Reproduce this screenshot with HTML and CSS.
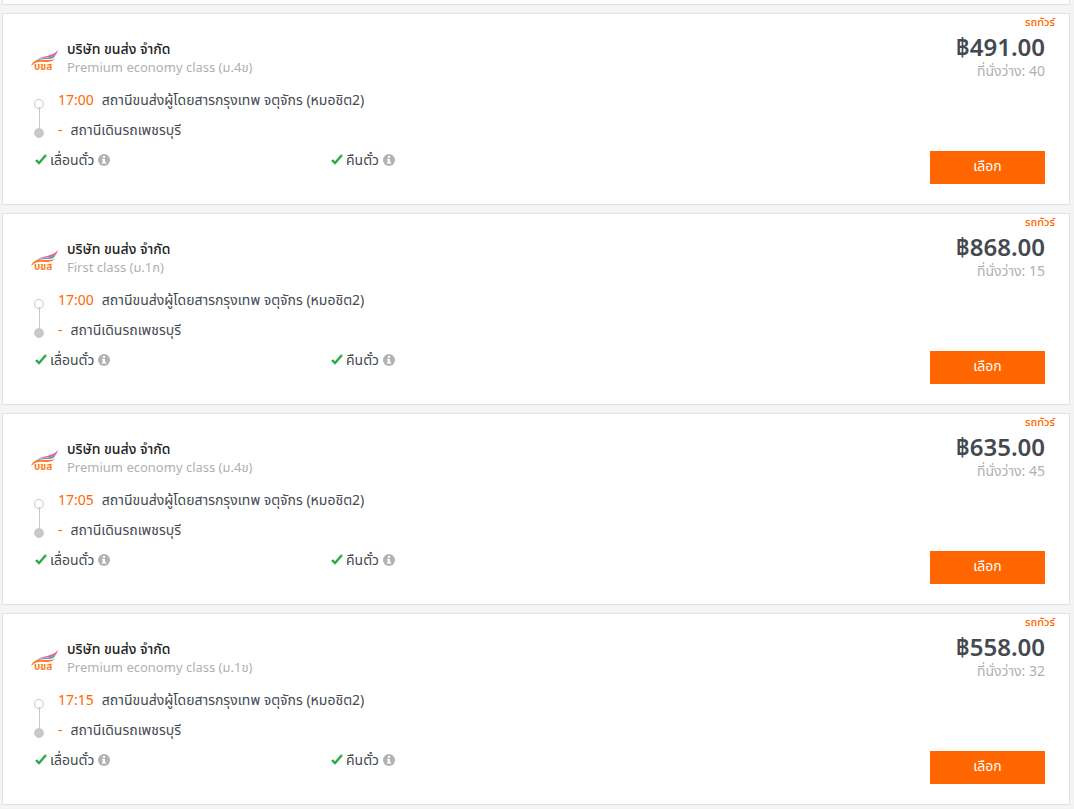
FILE: index.html
```
<!DOCTYPE html>
<html lang="th">
<head>
  <meta charset="UTF-8" />
  <meta name="viewport" content="width=device-width, initial-scale=1.0"/>
  <title>เที่ยวรถ</title>
  <link rel="stylesheet" href="styles.css">
</head>
<body>

  <svg class="sprite" aria-hidden="true">
    <symbol id="logo" viewBox="0 0 28 24">
      <path d="M7 9C11 6 15 7 19 5C23 4 25 2 27 0C26 4 24 6 20 7C15 8 11 7 7 9Z" fill="#e0629b"/>
      <path d="M4 11C9 7 14 9 20 7L25 5C23 8 20 9 17 9C11 9 8 9 4 11Z" fill="#508fbd"/>
      <path d="M0 16C3 9 9 9 15 10C19 10 22 10 24 8C22 12 18 12 14 12C8 11 4 12 0 16Z" fill="#ff7a20"/>
      <text x="3" y="20" class="logo-text">บขส</text>
    </symbol>
    <symbol id="check" viewBox="0 0 12 12">
      <path d="M1 6L4 9L11 1" fill="none" stroke="#28a745" stroke-width="2.4"/>
    </symbol>
    <symbol id="info" viewBox="0 0 12 12">
      <circle cx="6" cy="6" r="6" fill="#b3b3b3"/>
      <path d="M5 2h2v2H5zM4 5h3v3h1v1.500H4V8h1V6.500H4z" fill="#fff"/>
    </symbol>
  </svg>

  <main class="trips" id="trips">
    <div class="card card-end"></div>
  </main>

  <script>
    const trips = [
      { type: 'Premium economy class (ม.4ข)', time: '17:00', price: '491.00', seats: 40 },
      { type: 'First class (ม.1ก)', time: '17:00', price: '868.00', seats: 15 },
      { type: 'Premium economy class (ม.4ข)', time: '17:05', price: '635.00', seats: 45 },
      { type: 'Premium economy class (ม.1ข)', time: '17:15', price: '558.00', seats: 32 }
    ];

    document.getElementById('trips').innerHTML += trips.map(trip => `
      <article class="card">
        <div class="details">
          <div class="company">
            <svg class="logo"><use href="#logo"/></svg>
            <div>
              <h2 class="name">บริษัท ขนส่ง จำกัด</h2>
              <div class="type">${trip.type}</div>
            </div>
          </div>
          <div class="route">
            <div class="line"></div>
            <div>
              <div class="stop"><span class="time">${trip.time}</span>สถานีขนส่งผู้โดยสารกรุงเทพ จตุจักร (หมอชิต2)</div>
              <div class="stop"><span class="time">-</span>สถานีเดินรถเพชรบุรี</div>
            </div>
          </div>
          <div class="policies">
            <div class="policy"><svg class="icon"><use href="#check"/></svg>เลื่อนตั๋ว<svg class="icon info"><use href="#info"/></svg></div>
            <div class="policy"><svg class="icon"><use href="#check"/></svg>คืนตั๋ว<svg class="icon info"><use href="#info"/></svg></div>
          </div>
        </div>
        <div class="side">
          <div class="tag">รถทัวร์</div>
          <div class="price">฿${trip.price}</div>
          <div class="seats">ที่นั่งว่าง: ${trip.seats}</div>
          <button class="select">เลือก</button>
        </div>
      </article>`).join('');
  </script>

</body>
</html>
```
FILE: styles.css
```
* {
  box-sizing: border-box;
}

body {
  margin: 0;
  background: #f4f4f4;
  color: #444950;
  font-family: 'Noto Sans', 'Noto Sans Thai', 'Kanit', 'Loma', sans-serif;
  font-size: 14px;
}

.sprite {
  display: none;
}

.trips {
  display: flex;
  flex-direction: column;
  gap: 8px;
  padding: 0 4px 4px 2px;
}

.card {
  display: flex;
  justify-content: space-between;
  background: #fff;
  border: 1px solid #e1e1e6;
}

.card-end {
  height: 5px;
  border-top: none;
}

.details {
  flex: 1;
  padding: 26px 0 29px 28px;
}

.company {
  display: flex;
  align-items: flex-end;
  gap: 8px;
}

.logo {
  width: 28px;
  height: 24px;
  margin-bottom: 2px;
}

.logo-text {
  font-size: 10px;
  font-weight: bold;
  fill: #ff7a20;
}

.name {
  margin: 0;
  font-size: 14px;
  font-weight: 500;
  line-height: 18px;
  color: #222;
}

.type {
  font-size: 13px;
  line-height: 18px;
  color: #b0b0b0;
}

.route {
  display: flex;
  gap: 15px;
  margin: 9px 0 0 4px;
}

.line {
  display: flex;
  flex-direction: column;
  align-items: center;
  width: 8px;
  margin: 14px 0 7px;
  background: linear-gradient(#c8c8c8, #c8c8c8) center / 1px 24px no-repeat;
}

.line::before,
.line::after {
  content: '';
  width: 8px;
  height: 8px;
  border: 1px solid #c8c8c8;
  border-radius: 50%;
}

.line::after {
  margin-top: auto;
  background: #c8c8c8;
}

.stop {
  line-height: 30px;
}

.time {
  margin-right: 8px;
  color: #ff6600;
}

.policies {
  display: grid;
  grid-template-columns: 296px 1fr;
  margin-left: 4px;
}

.policy {
  display: flex;
  align-items: center;
  gap: 3px;
  line-height: 30px;
}

.icon {
  width: 12px;
  height: 12px;
}

.info {
  margin-left: 1px;
}

.side {
  display: flex;
  flex-direction: column;
  align-items: flex-end;
  padding: 0 24px 20px 0;
}

.tag {
  margin-right: -10px;
  font-size: 11px;
  font-weight: 500;
  line-height: 16px;
  color: #ff6600;
}

.price {
  font-size: 24px;
  font-weight: 600;
  line-height: 34px;
}

.seats {
  line-height: 14px;
  color: #b0b0b0;
}

.select {
  width: 115px;
  height: 33px;
  margin-top: auto;
  padding: 0 0 2px;
  border: none;
  background: #ff6600;
  color: #fff;
  font-family: inherit;
  font-size: 14px;
  cursor: pointer;
}
```
